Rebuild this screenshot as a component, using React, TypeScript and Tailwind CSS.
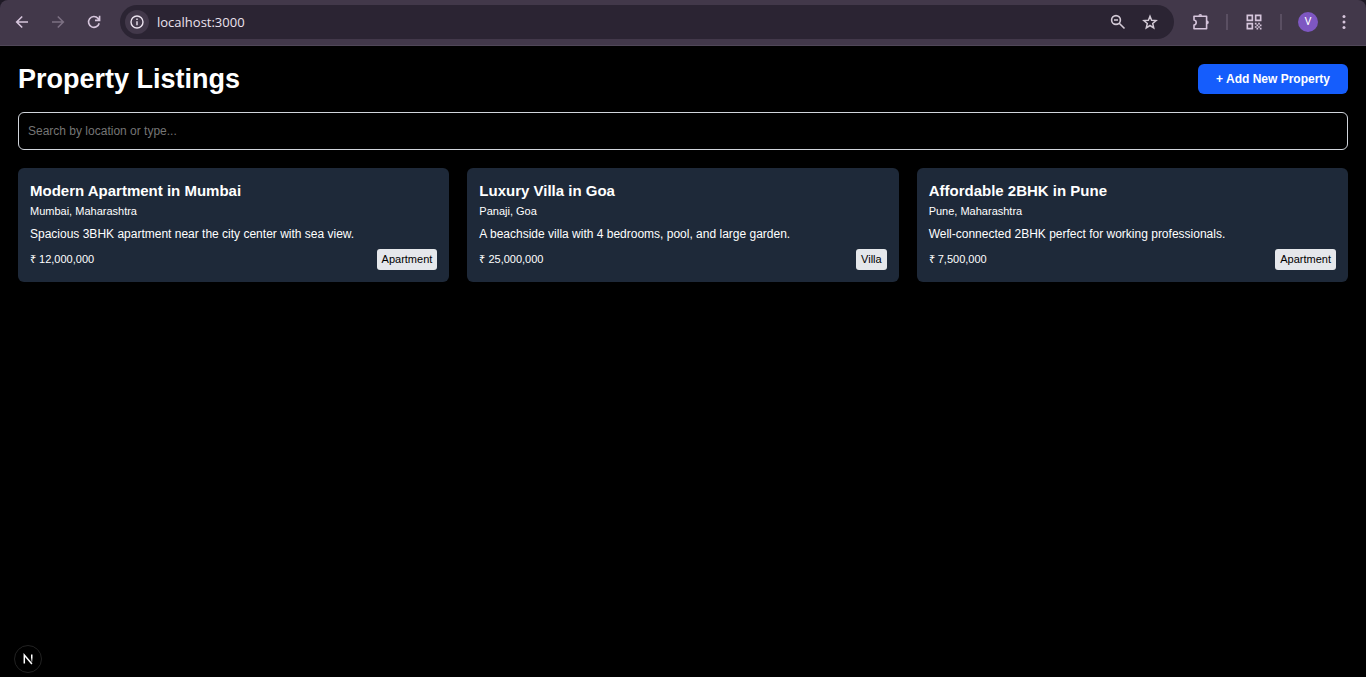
import { useState } from "react";
import { MdQrCode } from "react-icons/md";

type Property = {
  title: string;
  location: string;
  description: string;
  price: string;
  type: string;
};

const properties: Property[] = [
  {
    title: "Modern Apartment in Mumbai",
    location: "Mumbai, Maharashtra",
    description: "Spacious 3BHK apartment near the city center with sea view.",
    price: "12,000,000",
    type: "Apartment",
  },
  {
    title: "Luxury Villa in Goa",
    location: "Panaji, Goa",
    description: "A beachside villa with 4 bedrooms, pool, and large garden.",
    price: "25,000,000",
    type: "Villa",
  },
  {
    title: "Affordable 2BHK in Pune",
    location: "Pune, Maharashtra",
    description: "Well-connected 2BHK perfect for working professionals.",
    price: "7,500,000",
    type: "Apartment",
  },
];

function StrokeIcon({ d }: { d: string }) {
  return (
    <svg viewBox="0 0 16 16" className="size-4" fill="none" stroke="currentColor" strokeWidth="1.6" aria-hidden="true">
      <path d={d} />
    </svg>
  );
}

function BrowserBar() {
  return (
    <div className="bg-[#1f1a26]">
      <header className="flex h-[46px] items-center rounded-t-lg border-b border-[#504758] bg-[#42384a] px-3.5 pb-px text-[#d6c5dc]">
        <nav className="flex items-center gap-5" aria-label="Browser">
          <button type="button" aria-label="Back">
            <StrokeIcon d="M14 8H3M8.2 2.5 2.7 8l5.5 5.5" />
          </button>
          <button type="button" aria-label="Forward" className="text-[#7c7083]">
            <StrokeIcon d="M2 8h11M7.8 2.5 13.3 8l-5.5 5.5" />
          </button>
          <button type="button" aria-label="Reload">
            <StrokeIcon d="M13.2 9.2A5.4 5.4 0 1 1 12 4.4l1.6 1.8M13.6 1.8v4.6H9" />
          </button>
        </nav>
        <div className="ml-[18px] flex h-[34px] min-w-0 flex-1 items-center rounded-full bg-[#2b2433] pl-[5px] pr-[15px]">
          <button type="button" aria-label="Site information" className="flex size-6 shrink-0 items-center justify-center rounded-full bg-[#42384a] text-[#ece3ef]">
            <svg viewBox="0 0 16 16" className="size-4" fill="none" stroke="currentColor" strokeWidth="1.4" aria-hidden="true">
              <circle cx="8" cy="8" r="6" />
              <path d="M8 7.2v4M8 4.6v1.5" />
            </svg>
          </button>
          <input
            type="text"
            aria-label="Address"
            defaultValue="localhost:3000"
            className="ml-2 min-w-0 flex-1 bg-transparent font-['Open_Sans',sans-serif] text-[13px] leading-5 text-[#ebe2ee] outline-none"
          />
          <div className="flex items-center gap-[15px] text-[#d3cad6]">
            <button type="button" aria-label="Zoom">
              <svg viewBox="0 0 16 16" className="size-4" fill="none" stroke="currentColor" strokeWidth="1.6" aria-hidden="true">
                <circle cx="6" cy="6" r="4.4" />
                <path d="m9.2 9.2 5.3 5.3M4 6h4" />
              </svg>
            </button>
            <button type="button" aria-label="Bookmark this page">
              <svg viewBox="0 0 18 18" className="size-[18px]" fill="none" stroke="currentColor" strokeWidth="1.5" aria-hidden="true">
                <path d="m9 3.2 1.6 4 4.5.4-3.4 2.9 1 4.3L9 12.5l-3.7 2.3 1-4.3-3.4-2.9 4.5-.4z" />
              </svg>
            </button>
          </div>
        </div>
        <div className="ml-[18px] flex items-center">
          <button type="button" aria-label="Extensions">
            <svg viewBox="0 0 18 18" className="size-[18px]" fill="none" stroke="currentColor" strokeWidth="1.6" strokeLinejoin="round" aria-hidden="true">
              <path d="M2 3.2h12.6v12.6H2v-3.8q2.2-.4 2.2-2.5T2 7z" />
              <path d="M6.4 2.8a1.9 1.9 0 0 1 3.8 0zM15 7.6a1.8 1.8 0 0 1 0 3.6z" fill="currentColor" stroke="none" />
            </svg>
          </button>
          <span className="ml-4 h-4 w-0.5 bg-[#5a4f62]" />
          <button type="button" aria-label="QR code" className="ml-4">
            <MdQrCode className="size-5" />
          </button>
          <span className="ml-4 h-4 w-0.5 bg-[#5a4f62]" />
          <button type="button" aria-label="Profile" className="ml-4 flex size-5 items-center justify-center rounded-full bg-[#7e57c2] font-['Roboto',sans-serif] text-[11px] leading-5 text-white">
            V
          </button>
          <button type="button" aria-label="Menu" className="ml-[18px]">
            <svg viewBox="0 0 16 16" className="size-4" fill="currentColor" aria-hidden="true">
              <circle cx="8" cy="2.5" r="1.5" />
              <circle cx="8" cy="8" r="1.5" />
              <circle cx="8" cy="13.5" r="1.5" />
            </svg>
          </button>
        </div>
      </header>
    </div>
  );
}

function PropertyCard({ property }: { property: Property }) {
  return (
    <article className="rounded-md bg-[#1e2939] p-3">
      <h2 className="text-[15px] font-bold leading-[22px]">{property.title}</h2>
      <p className="text-[11px] leading-[18px]">{property.location}</p>
      <p className="mt-1 text-[12px] leading-[20px]">{property.description}</p>
      <div className="mt-[5px] flex items-center justify-between text-[11px]">
        <span>₹ {property.price}</span>
        <span className="rounded-[3px] bg-gray-200 px-[5px] py-0.5 leading-[17px] text-black">{property.type}</span>
      </div>
    </article>
  );
}

export default function App() {
  const [query, setQuery] = useState("");
  const term = query.trim().toLowerCase();
  const visible = properties.filter((p) => `${p.location} ${p.type}`.toLowerCase().includes(term));

  return (
    <div className="flex min-h-screen flex-col bg-black font-['Liberation_Sans',Arial,sans-serif] text-white">
      <BrowserBar />
      <main className="flex-1 p-[18px]">
        <div className="flex items-center justify-between">
          <h1 className="text-[27px] font-bold leading-[30px]">Property Listings</h1>
          <button type="button" className="rounded-md bg-[#155dfc] px-[18px] py-[5px] text-[12px] font-bold leading-5">
            + Add New Property
          </button>
        </div>
        <input
          type="text"
          aria-label="Search properties"
          placeholder="Search by location or type..."
          value={query}
          onChange={(e) => setQuery(e.target.value)}
          className="mt-[18px] block w-full rounded-md border border-gray-300 bg-transparent px-[9px] py-2 text-[12px] leading-5 outline-none placeholder:text-[#757575]"
        />
        <section className="mt-[18px] grid grid-cols-1 gap-[18px] sm:grid-cols-2 lg:grid-cols-3">
          {visible.map((property) => (
            <PropertyCard key={property.title} property={property} />
          ))}
        </section>
      </main>
      <button
        type="button"
        aria-label="Open developer tools"
        className="fixed bottom-1 left-3.5 flex size-7 items-center justify-center rounded-full border border-[#222222] bg-black"
      >
        <svg viewBox="0 0 12 12" className="size-3" fill="none" strokeWidth="1.5" aria-hidden="true">
          <defs>
            <linearGradient id="fade" x1="0" y1="0" x2="0" y2="1">
              <stop offset="0.4" stopColor="#fff" />
              <stop offset="1" stopColor="#fff" stopOpacity="0.2" />
            </linearGradient>
          </defs>
          <path d="M2.3 10.6V2l7.6 9" stroke="#fff" />
          <path d="M9 1.6h1.5v7.6H9z" fill="url(#fade)" />
        </svg>
      </button>
    </div>
  );
}
